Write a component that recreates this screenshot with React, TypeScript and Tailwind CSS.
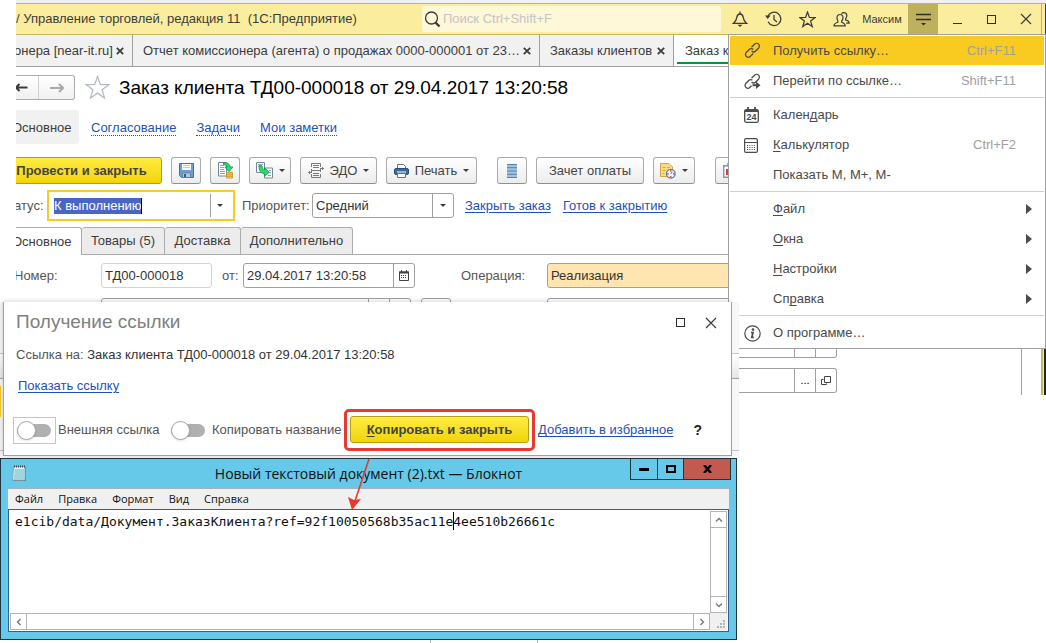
import type { ReactNode } from 'react';
import clsx from 'clsx';

function CloseMark({ size = 8 }: { size?: number }) {
  return (
    <svg width={size} height={size} viewBox="0 0 8 8" fill="none" stroke="#3c3c3c" strokeWidth="1.8">
      <path d="M.8.8l6.4 6.4M7.2.8L.8 7.2" />
    </svg>
  );
}

function ThinCross() {
  return (
    <svg width="12" height="12" viewBox="0 0 12 12" fill="none" stroke="#3c3c3c" strokeWidth="1.2">
      <path d="M1 1l10 10M11 1L1 11" />
    </svg>
  );
}

function Caret() {
  return (
    <svg width="6" height="3" viewBox="0 0 6 3" fill="#3c3c3c">
      <path d="M0 0h6L3 3z" />
    </svg>
  );
}

function SearchIcon() {
  return (
    <svg width="17" height="17" viewBox="0 0 17 17" fill="none" stroke="#3c3c3c">
      <circle cx="7.5" cy="7" r="6" strokeWidth="1.3" />
      <path d="M11.5 11.5l4 4" strokeWidth="2.4" />
    </svg>
  );
}

function BellIcon() {
  return (
    <svg width="16" height="16" viewBox="0 0 16 16" fill="none" stroke="#3c3c3c" strokeWidth="1.3">
      <path d="M1.500 12.300c2.200-1.800 3-3.800 3.300-6C5.100 4.200 6 3 8 3s2.900 1.200 3.200 3.300c.3 2.200 1.100 4.200 3.300 6z" />
      <path d="M8 .5v2.500" />
      <path d="M5.500 13.800h5L8 16z" fill="#3c3c3c" stroke="none" />
    </svg>
  );
}

function HistoryIcon() {
  return (
    <svg width="17" height="16" viewBox="0 0 17 16" fill="none" stroke="#3c3c3c" strokeWidth="1.3">
      <path d="M2.700 6a6.700 6.700 0 1 1 .4 4.800" />
      <path d="M0 4.500h5.600L2.700 8z" fill="#3c3c3c" stroke="none" />
      <path d="M9 4v4.500l3 2.500" />
    </svg>
  );
}

function StarIcon({ size, color }: { size: number; color: string }) {
  return (
    <svg width={size} height={size} viewBox="0 0 24 24" fill="none" stroke={color} strokeWidth={size > 18 ? 1.200 : 1.800}>
      <path d="M12 1.500l2.700 7.600 8.100.2-6.400 4.900 2.300 7.800L12 17.400 5.300 22l2.300-7.800L1.200 9.300l8.100-.2z" />
    </svg>
  );
}

function UsersIcon() {
  return (
    <svg width="17" height="15" viewBox="0 0 17 15" fill="none" stroke="#3c3c3c" strokeWidth="1.2">
      <path d="M7 2.500c2 0 3 1.200 3 3.200 0 1.500-.6 2.600-1.300 3.300v1.200c1.900.6 3.500 1.300 3.500 3.600H1c0-2.300 1.900-3 3.900-3.600V9C4.400 8.300 4 7.200 4 5.700c0-2 1-3.200 3-3.200z" />
      <path d="M8.500 1.800C9 1 9.800.6 10.800.6c2 0 3 1.200 3 3 0 1.400-.5 2.400-1.200 3.100v1.100c1.900.5 3.600 1.200 3.600 3.400h-3" />
    </svg>
  );
}

function LinkIcon({ arrow = false }: { arrow?: boolean }) {
  return (
    <svg width="17" height="17" viewBox="0 0 17 17" fill="none" stroke="#4a4a4a" strokeWidth="1.3">
      <path d="M7.500 5.200l3-3c1.200-1.200 3-1.200 4.100-.1s1.100 2.900-.1 4.100l-2.800 2.800c-1.200 1.200-3 1.100-4.100 0" />
      {arrow ? (
        <>
          <path d="M7.500 12.800l-1.500 1.500c-1.200 1.200-3 1.200-4.100.1s-1.100-2.900.1-4.100l2.700-2.800c1-1 2.500-1.100 3.600-.4" />
          <path d="M8.500 12.200h4" strokeWidth="2" />
          <path d="M12 8.500v7.400l4.500-3.700z" fill="#4a4a4a" stroke="none" />
        </>
      ) : (
        <path d="M9.200 11.500l-2.800 2.800c-1.200 1.200-3 1.200-4.100.1s-1.100-2.900.1-4.100l2.800-2.800c1.200-1.200 3-1.100 4.100 0" />
      )}
    </svg>
  );
}

function CalendarIcon() {
  return (
    <svg width="15" height="16" viewBox="0 0 15 16" fill="none" stroke="#4a4a4a">
      <rect x=".7" y="2.700" width="13.600" height="12.600" rx="1.500" strokeWidth="1.300" />
      <path d="M.7 4h13.600" strokeWidth="2" />
      <path d="M4 0v3M11 0v3" strokeWidth="1.800" />
      <text x="7.500" y="13.300" textAnchor="middle" fontSize="9" fontWeight="700" fill="#4a4a4a" stroke="none">24</text>
    </svg>
  );
}

function CalculatorIcon() {
  return (
    <svg width="14" height="15" viewBox="0 0 14 15" fill="none" stroke="#4a4a4a">
      <rect x=".6" y=".6" width="12.800" height="13.800" rx="1.500" strokeWidth="1.200" />
      <path d="M1 4.500h12" />
      <path d="M3 7.500h8M3 9.500h8M3 11.500h8" strokeDasharray="1 1.300" />
    </svg>
  );
}

function InfoIcon() {
  return (
    <svg width="17" height="17" viewBox="0 0 17 17" fill="none" stroke="#4a4a4a">
      <circle cx="8.500" cy="8.500" r="7.700" strokeWidth="1.200" />
      <circle cx="9" cy="4.600" r="1.300" fill="#4a4a4a" stroke="none" />
      <path d="M7 7.500h2l-1.200 4.800h2" strokeWidth="1.700" />
    </svg>
  );
}

function SaveIcon() {
  return (
    <svg width="15" height="15" viewBox="0 0 15 15">
      <path d="M.5.500h14v14h-12l-2-2z" fill="#6f9dcb" stroke="#416f9f" />
      <path d="M3 1h9v6H3z" fill="#fff" />
      <path d="M4 2.500h7M4 4.500h7" stroke="#b4cbe0" />
      <path d="M3.500 10h8v4.500h-8z" fill="#b9c5d0" stroke="#416f9f" strokeWidth=".6" />
      <path d="M5 11h2v3H5z" fill="#2f5c89" />
    </svg>
  );
}

function PostIcon() {
  return (
    <svg width="17" height="17" viewBox="0 0 17 17">
      <path d="M1.500.500h8v13.500h-8z" fill="#fff" stroke="#7388a0" />
      <path d="M3 3.500h4M3 5.500h4M3 7.500h4M3 9.500h5M3 11.500h5" stroke="#8fa2b5" />
      <path d="M6.500.8c4 0 6.500 1 6.700 4.200h2.800L12 9.500 7.800 5h2.400C10 3.500 9 2.800 6.500 2.800z" fill="#2dd873" stroke="#13944a" strokeWidth=".8" />
      <path d="M9.500 10.500h6v5.500h-6z" fill="#f5cf55" stroke="#c19421" strokeWidth=".8" />
      <path d="M9.500 12.300h6M9.500 14.200h6" stroke="#c19421" strokeWidth=".8" />
    </svg>
  );
}

function CreateFromIcon() {
  return (
    <svg width="17" height="17" viewBox="0 0 17 17">
      <path d="M.5.500h8v10h-8z" fill="#fff" stroke="#7388a0" />
      <path d="M2 2.500h5M2 4.500h4" stroke="#8fa2b5" />
      <path d="M8.500 6h8v10h-8z" fill="#fff" stroke="#7388a0" />
      <path d="M13 8.500h2M13 10.500h2M12 13.500h3" stroke="#8fa2b5" />
      <path d="M3 3.500l3 .3c.2 2.500 1 3.700 2.500 4V5.500l4.700 4.700-4.700 4.300v-2.700C5 11.500 3 9 3 3.500z" fill="#2dd873" stroke="#13944a" strokeWidth=".8" />
    </svg>
  );
}

function ExchangeIcon() {
  return (
    <svg width="16" height="15" viewBox="0 0 16 15" fill="none" stroke="#7b7b7b">
      <path d="M3.500 4V.500h9V4M3.500 11v3.500h9V11M3.500 6v3M12.500 6v3" />
      <path d="M5 2.500h6M5 4.500h6M4 7.500h8M5 10.500h6M5 12.500h6" />
      <path d="M12 5.500h4M0 9.500h4M1.500 8v3M14.500 4v3" />
    </svg>
  );
}

function PrinterIcon() {
  return (
    <svg width="15" height="14" viewBox="0 0 15 14">
      <path d="M3.500 5V.500h6l2 2V5" fill="#fff" stroke="#5f7488" />
      <rect x=".5" y="4.500" width="14" height="6" rx="1.500" fill="#3c6a96" stroke="#28527a" />
      <path d="M3 8h9" stroke="#fff" />
      <path d="M3.500 9.500h8v4h-8z" fill="#fff" stroke="#5f7488" />
    </svg>
  );
}

function RowsIcon() {
  return (
    <svg width="10" height="14" viewBox="0 0 10 14">
      <path d="M0 0h10v14H0z" fill="#a5c3df" />
      <path d="M0 .500h10M0 3.700h10M0 7h10M0 10.300h10M0 13.500h10" stroke="#5580a8" />
    </svg>
  );
}

function ReportIcon() {
  return (
    <svg width="16" height="16" viewBox="0 0 16 16">
      <path d="M.5.500h8.500l3.500 3.500v9.500h-12z" fill="#f5dc82" stroke="#cda94a" />
      <path d="M2.500 4.500h3M7 4.500h3M2.500 7.500h3M2.500 10.500h2" stroke="#cda94a" />
      <circle cx="10.800" cy="10.800" r="4.300" fill="#eef5fc" stroke="#4b77a5" strokeWidth="1.200" />
      <path d="M10.800 7.300v1.400M10.800 13v1.400M7.300 10.800h1.400M13 10.800h1.400" stroke="#d22" strokeWidth="1.200" />
      <path d="M10.800 10.800l1.500-2" stroke="#4b77a5" />
    </svg>
  );
}

function ChartIcon() {
  return (
    <svg width="15" height="15" viewBox="0 0 15 15">
      <path d="M.7 2.700h13.600v11.600H.7z" fill="#fff" stroke="#8494a3" strokeWidth="1.400" />
      <path d="M4.500 2.500V.700h6v1.800" fill="none" stroke="#8494a3" />
      <path d="M4 6v6" stroke="#e04030" strokeWidth="2" />
      <path d="M7 5v7" stroke="#e04030" strokeWidth="2" />
    </svg>
  );
}

function DateIcon() {
  return (
    <svg width="10" height="11" viewBox="0 0 10 11" fill="none" stroke="#444">
      <path d="M.5 2h9v8.500h-9z" />
      <path d="M0 2.500h10" strokeWidth="2" />
      <path d="M2.500 0v2M7.500 0v2" />
      <path d="M2 5.500h6M2 7.500h6" strokeDasharray="1 1" />
    </svg>
  );
}

function ToolButton({ label, className, children }: { label?: string; className?: string; children: ReactNode }) {
  return (
    <button
      aria-label={label}
      className={clsx(
        'flex h-[27px] shrink-0 items-center justify-center rounded-[3px] border border-[#ababab] border-b-[#8f8f8f] bg-gradient-to-b from-white to-[#ececec] text-[#444]',
        className,
      )}
    >
      {children}
    </button>
  );
}

const openTabs = [
  { title: 'онера [near-it.ru]', width: 'w-[117px] -indent-0.5' },
  { title: 'Отчет комиссионера (агента) о продажах 0000-000001 от 23…', width: 'w-[407px] pl-2.5' },
  { title: 'Заказы клиентов', width: 'w-[134px] pl-2.5' },
];

const sectionLinks = ['Согласование', 'Задачи', 'Мои заметки'];

const formTabs = [
  { title: 'Товары (5)', width: 'w-[83px]' },
  { title: 'Доставка', width: 'w-[76px]' },
  { title: 'Дополнительно', width: 'w-28' },
];

type MenuEntry = { before?: string; key?: string; after: string; shortcut?: string; icon?: ReactNode; sub?: boolean; active?: boolean };

const menuGroups: MenuEntry[][] = [
  [
    { after: 'Получить ссылку…', shortcut: 'Ctrl+F11', icon: <LinkIcon />, active: true },
    { after: 'Перейти по ссылке…', shortcut: 'Shift+F11', icon: <LinkIcon arrow /> },
  ],
  [
    { before: 'Кален', key: 'д', after: 'арь', icon: <CalendarIcon /> },
    { key: 'К', after: 'алькулятор', shortcut: 'Ctrl+F2', icon: <CalculatorIcon /> },
    { after: 'Показать М, М+, М-' },
  ],
  [
    { key: 'Ф', after: 'айл', sub: true },
    { key: 'О', after: 'кна', sub: true },
    { key: 'Н', after: 'астройки', sub: true },
    { before: 'Сп', key: 'р', after: 'авка', sub: true },
  ],
  [{ after: 'О программе…', icon: <InfoIcon /> }],
];

function TitleBar() {
  return (
    <header className="flex h-8 items-center border-y border-[#c3b660] bg-[#fbed9e] text-[#3c3c3c]">
      <h1 className="w-[406px] shrink-0 whitespace-pre text-[13px]">/ Управление торговлей, редакция 11  (1С:Предприятие)</h1>
      <label className="flex h-[26px] min-w-0 flex-1 items-center gap-0.5 rounded-[3px] bg-[#fef7d8] pl-0.5">
        <SearchIcon />
        <input
          aria-label="Поиск"
          placeholder="Поиск Ctrl+Shift+F"
          className="min-w-0 flex-1 bg-transparent text-[13px] outline-none placeholder:text-[#c4c4c4]"
        />
      </label>
      <div className="ml-[11px] flex items-center gap-[17px]">
        <button aria-label="Уведомления"><BellIcon /></button>
        <button aria-label="История"><HistoryIcon /></button>
        <button aria-label="Избранное"><StarIcon size={17} color="#3c3c3c" /></button>
        <button aria-label="Пользователи"><UsersIcon /></button>
      </div>
      <button className="ml-3 w-[40px] text-[11px]">Максим</button>
      <button aria-label="Меню" className="ml-[6px] flex h-[30px] w-[30px] items-center justify-center bg-[#bfb05e]">
        <svg width="15" height="13" viewBox="0 0 15 13" stroke="#2e2e2e" strokeWidth="1.400">
          <path d="M0 1.500h15M0 6.500h15" />
          <path d="M5 10h5l-2.500 2.500z" fill="#2e2e2e" stroke="none" />
        </svg>
      </button>
      <button aria-label="Свернуть" className="ml-[15px] flex h-[9px] w-[9px] items-end">
        <span className="h-px w-full bg-[#2e2e2e]" />
      </button>
      <button aria-label="Развернуть" className="ml-[25px] h-[9px] w-[9px] border border-[#2e2e2e]" />
      <button aria-label="Закрыть" className="ml-6"><ThinCross /></button>
      <span className="ml-[9px] h-full w-[5px] border-x border-l-[#c3b660] border-r-[#3a3a3a]" />
    </header>
  );
}

function MainMenu() {
  return (
    <nav className="absolute right-0 top-[34px] z-10 w-[318px] border border-[#a0a0a0] bg-white pt-px text-[13px] text-[#4a4a4a]">
      {menuGroups.map((group, index) => (
        <div key={index}>
          {index > 0 && <hr className="mx-px my-px h-0.5 border-0 border-t border-[#d2d2bc] pt-px" />}
          {group.map((item) => (
            <button
              key={item.after}
              className={clsx('flex h-[30px] w-full items-center border-x border-white pl-3.5 pr-3', item.active && 'bg-[#f9cb21] border-b')}
            >
              <span className="flex w-[29px] shrink-0 items-center">{item.icon}</span>
              <span>
                {item.before}
                {item.key && <u className="underline-offset-2 [text-decoration-skip-ink:none]">{item.key}</u>}
                {item.after}
              </span>
              {item.shortcut && <span className="ml-auto mr-4 text-[#a0a0a0]">{item.shortcut}</span>}
              {item.sub && (
                <svg className="ml-auto" width="6" height="10" viewBox="0 0 6 10" fill="#4a4a4a">
                  <path d="M0 0l6 5-6 5z" />
                </svg>
              )}
            </button>
          ))}
        </div>
      ))}
    </nav>
  );
}

function OrderForm() {
  return (
    <main className="ml-4 h-[267px] overflow-hidden text-[13px] text-[#555]">
      <div className="flex h-8 border-b border-[#a0a0a0] bg-[#f1f1f1] text-[#3c3c3c]">
        {openTabs.map((tab) => (
          <div key={tab.title} className={clsx('flex shrink-0 items-center justify-between border-r border-[#a0a0a0] pr-2', tab.width)}>
            <span className="truncate">{tab.title}</span>
            <button aria-label="Закрыть вкладку"><CloseMark /></button>
          </div>
        ))}
        <div className="flex flex-1 flex-col bg-white pl-[3px]">
          <span className="flex h-[27px] items-center whitespace-nowrap pl-2 pt-1">Заказ клиента</span>
          <span className="h-0.5 bg-[#009646]" />
        </div>
      </div>

      <div className="flex items-center pt-2">
        <div className="flex h-[25px] w-[59px] overflow-hidden rounded-r-[3px] border border-l-0 border-[#ababab] bg-gradient-to-b from-white to-[#f1f1f1]">
          <button aria-label="Назад" className="flex w-[23px] items-center border-r border-[#d0d0d0]">
            <svg width="12" height="9" viewBox="0 0 12 9" fill="none" stroke="#3c3c3c" strokeWidth="2">
              <path d="M11.500 4.500H1M3.500 1L0 4.500 3.500 8" />
            </svg>
          </button>
          <button aria-label="Вперед" className="flex flex-1 items-center justify-center">
            <svg width="14" height="10" viewBox="0 0 14 10" fill="none" stroke="#a8a8a8" strokeWidth="2">
              <path d="M0 5h12.500M9 1l4 4-4 4" />
            </svg>
          </button>
        </div>
        <button aria-label="В избранное" className="ml-2.5"><StarIcon size={25} color="#b3b8c2" /></button>
        <h2 className="ml-[9px] text-[19px] leading-6 text-black">Заказ клиента ТД00-000018 от 29.04.2017 13:20:58</h2>
      </div>

      <div className="mt-2.5 flex h-[34px] items-center gap-5">
        <span className="-mr-2 flex h-full w-[63px] items-center rounded-r-[3px] bg-[#f1f1f1] pt-px text-[#3c3c3c] -indent-1">Основное</span>
        {sectionLinks.map((title) => (
          <a key={title} href="#" className="mt-0.5 border-b border-dotted border-[#1f51b5] leading-[14px] text-[#1f51b5]">
            {title}
          </a>
        ))}
      </div>

      <div className="mt-[13px] flex gap-[9px]">
        <button className="-ml-[15px] h-[27px] w-[161px] shrink-0 rounded-[3px] border border-[#b39f14] bg-gradient-to-b from-[#ffec3d] to-[#f3d400] text-[13px] font-bold text-[#444]">
          Провести и закрыть
        </button>
        <ToolButton label="Записать" className="w-[30px]"><SaveIcon /></ToolButton>
        <ToolButton label="Провести" className="w-[30px]"><PostIcon /></ToolButton>
        <ToolButton label="Создать на основании" className="w-[42px] gap-1.5"><CreateFromIcon /><Caret /></ToolButton>
        <ToolButton className="w-[77px] gap-1.5"><ExchangeIcon />ЭДО<Caret /></ToolButton>
        <ToolButton className="w-[91px] gap-1.5"><PrinterIcon />Печать<Caret /></ToolButton>
        <ToolButton label="Структура" className="ml-[11px] w-[30px]"><RowsIcon /></ToolButton>
        <ToolButton className="w-[108px]">Зачет оплаты</ToolButton>
        <ToolButton label="Отчеты" className="w-[42px] gap-1.5"><ReportIcon /><Caret /></ToolButton>
        <ToolButton label="Анализ" className="ml-[11px] w-[30px]"><ChartIcon /></ToolButton>
      </div>

      <div className="mt-1.5 flex h-[31px] items-center">
        <label htmlFor="status" className="w-[31px] -indent-0.5">атус:</label>
        <div className="flex h-[31px] w-[188px] items-center border-2 border-[#f9cb21] pl-[5px]">
          <input
            id="status"
            defaultValue="К выполнению"
            className="h-4 w-[88px] border-r border-black bg-[#4a66c4] text-white outline-none"
          />
          <button aria-label="Выбрать статус" className="ml-auto flex h-[23px] w-[23px] items-center border-l border-[#a0a0a0] pl-1.5"><Caret /></button>
        </div>
        <label htmlFor="priority" className="ml-[7px] w-[70px]">Приоритет:</label>
        <div className="flex h-[25px] w-[142px] items-center rounded-[3px] border border-[#a0a0a0]">
          <select id="priority" className="h-full flex-1 appearance-none pl-[3px] text-[#333] outline-none">
            <option>Средний</option>
          </select>
          <span className="flex h-full w-[21px] items-center justify-center border-l border-[#a0a0a0]"><Caret /></span>
        </div>
        <a href="#" className="ml-[11px] text-[#1f51b5] underline underline-offset-2">Закрыть заказ</a>
        <a href="#" className="ml-3 text-[#1f51b5] underline underline-offset-2">Готов к закрытию</a>
      </div>

      <div className="mt-1.5 flex h-7 text-[#3c3c3c]">
        <button className="w-[66px] rounded-tr-[3px] border-r border-t border-[#ababab] text-left -indent-1">Основное</button>
        {formTabs.map((tab) => (
          <button key={tab.title} className={clsx('rounded-t-[3px] border border-l-0 border-[#ababab] bg-[#ececec]', tab.width)}>
            {tab.title}
          </button>
        ))}
        <span className="flex-1 border-b border-[#ababab]" />
      </div>

      <div className="mt-2 flex h-[25px] items-center">
        <label htmlFor="number" className="w-[85px] -indent-0.5">Номер:</label>
        <input id="number" defaultValue="ТД00-000018" className="h-full w-[111px] rounded-[3px] border border-[#d4d4d4] px-[3px] text-[#333]" />
        <label htmlFor="date" className="ml-2.5 w-[21px]">от:</label>
        <div className="flex h-full w-[172px] rounded-[3px] border border-[#a0a0a0]">
          <input id="date" defaultValue="29.04.2017 13:20:58" className="min-w-0 flex-1 px-[3px] text-[#333]" />
          <button aria-label="Выбрать дату" className="flex w-[21px] items-center justify-center border-l border-[#a0a0a0]"><DateIcon /></button>
        </div>
        <label htmlFor="operation" className="ml-[46px] w-[86px]">Операция:</label>
        <select id="operation" className="h-full flex-1 appearance-none rounded-[3px] border border-[#a0a0a0] bg-[#ffe6b0] px-[3px] text-[#333]">
          <option>Реализация</option>
        </select>
      </div>

      <div className="mt-2.5 flex h-[25px]">
        <div className="ml-[85px] flex w-[310px] justify-end rounded-[3px] border border-[#a0a0a0]">
          <span className="w-[21px] border-l border-[#a0a0a0]" />
          <span className="w-[21px] border-l border-[#a0a0a0]" />
        </div>
        <div className="ml-2.5 w-[30px] rounded-[3px] border border-[#a0a0a0]" />
        <div className="ml-24 flex-1 rounded-[3px] border border-[#a0a0a0]" />
      </div>
    </main>
  );
}

// slice of the form that stays visible on either side of the dialog
function FormSlice({ className, focused = false }: { className: string; focused?: boolean }) {
  return (
    <div className={clsx('shrink-0 bg-[#f7f7f7]', className)}>
      <div className="h-[52px] border-b border-[#c4c4c4]" />
      <div className="h-[25px] border-b border-[#a0a0a0] bg-gradient-to-b from-white to-[#e6e6e6]" />
      <div className="h-[72px] border-b border-[#c4c4c4] pt-[7px]">
        {focused && <div className="h-[31px] w-px bg-[#f9cb21]" />}
      </div>
    </div>
  );
}

function Switch({ label, focused = false }: { label: string; focused?: boolean }) {
  return (
    <label className="flex items-center gap-0.5">
      <span className={clsx('flex h-[27px] w-[43px] items-center pl-1', focused && 'outline -outline-offset-1 outline-[#f9cb21]')}>
        <input
          type="checkbox"
          className="relative h-[13px] w-[34px] appearance-none rounded-full bg-[#b0b0b0] before:absolute before:-top-[3px] before:left-0 before:h-[19px] before:w-[19px] before:rounded-full before:border before:border-[#a8a8a8] before:bg-white before:shadow-sm"
        />
      </span>
      {label}
    </label>
  );
}

function LinkDialog() {
  return (
    <div className="flex">
      <FormSlice className="w-[3px]" focused />
      <section className="min-w-0 flex-1 whitespace-nowrap border border-t-0 border-[#a0a0a0] bg-white pb-1 text-[13px] text-[#555] shadow-[0_0_6px_rgba(0,0,0,0.2)]">
        <div className="flex h-[41px] items-center pl-3 pr-3.5">
          <h2 className="flex-1 text-[19px] text-[#808080]">Получение ссылки</h2>
          <button aria-label="Развернуть" className="mr-5 h-[9px] w-[9px] border border-[#2e2e2e]" />
          <button aria-label="Закрыть"><ThinCross /></button>
        </div>
        <p className="h-6 pl-3 leading-6">
          Ссылка на: <span className="text-[#333]">Заказ клиента ТД00-000018 от 29.04.2017 13:20:58</span>
        </p>
        <p className="mt-[7px] h-6 pl-3.5 leading-6">
          <a href="#" className="text-[#1f51b5] underline underline-offset-2">Показать ссылку</a>
        </p>
        <div className="mt-[11px] flex h-[42px] items-center pl-[9px]">
          <div className="w-[154px]"><Switch label="Внешняя ссылка" focused /></div>
          <div className="w-[177px]"><Switch label="Копировать название" /></div>
          <div className="h-full w-[191px] rounded-[5px] border-[3px] border-[#e53a30] px-[3px] py-1">
            <button className="h-[27px] w-full rounded-[3px] border border-[#b39f14] bg-gradient-to-b from-[#ffec3d] to-[#f3d400] font-bold text-[#444]">
              <u className="underline-offset-2">К</u>опировать и закрыть
            </button>
          </div>
          <a href="#" className="ml-[3px] text-[#1f51b5] underline underline-offset-2">Добавить в избранное</a>
          <button aria-label="Справка" className="ml-5 text-[14px] font-bold text-[#222]">?</button>
        </div>
      </section>
      <FormSlice className="w-[7px]" />
    </div>
  );
}

function ScrollButton({ label, path, className }: { label: string; path: string; className: string }) {
  return (
    <button aria-label={label} className={clsx('flex items-center justify-center border-[#b4b4b4]', className)}>
      <svg width="8" height="8" viewBox="0 0 8 8" fill="none" stroke="#777" strokeWidth="1.400">
        <path d={path} />
      </svg>
    </button>
  );
}

function Notepad() {
  return (
    <section className="relative mr-0.5 mt-0.5 h-[182px] border border-[#1f3440] bg-[#66c9ea] px-[7px] font-['Open_Sans','Noto_Sans',sans-serif] text-[#111]">
      <div className="grid h-[29px] grid-cols-[1fr_auto_1fr]">
        <svg className="ml-1 mt-1.5" width="15" height="17" viewBox="0 0 15 17">
          <path d="M2 2h12v14H1z" fill="#6a7f86" />
          <path d="M1.500 1.500h11.500v13.500H.500z" fill="#d8f2f6" stroke="#7fa9b3" />
          <path d="M2.500 5h9.500M2.500 7h9.500M2.500 9h9.500M2 11h10M2 13h10" stroke="#68b6c6" />
          <path d="M2 1.500h11" stroke="#445" strokeWidth="2" strokeDasharray="1 1" />
        </svg>
        <h2 className="text-[14px] leading-[30px]">Новый текстовый документ (2).txt — Блокнот</h2>
        <div className="-mr-0.5 -mt-px flex h-[22px] justify-self-end border border-[#1f3440]">
          <button aria-label="Свернуть" className="flex w-[27px] items-center justify-center border-r border-[#1f3440]">
            <span className="h-[3px] w-2.5 bg-black" />
          </button>
          <button aria-label="Развернуть" className="flex w-[26px] items-center justify-center border-r border-[#1f3440]">
            <span className="h-2 w-2.5 border-2 border-black" />
          </button>
          <button aria-label="Закрыть" className="flex w-[46px] items-center justify-center bg-[#c25a50]">
            <svg width="9" height="8" viewBox="0 0 9 8" fill="none" stroke="#000" strokeWidth="2.400">
              <path d="M1 0l7 8M8 0L1 8" />
            </svg>
          </button>
        </div>
      </div>
      <div className="flex h-[21px] items-center gap-[15px] border-t border-[#a3b3ba] bg-[#f0f0f0] pl-[7px] text-[11px]">
        {['Файл', 'Правка', 'Формат', 'Вид', 'Справка'].map((item) => (
          <button key={item}>{item}</button>
        ))}
      </div>
      <div className="border border-[#2f628f] bg-white p-px">
        <div className="flex h-[102px]">
          <div className="relative min-w-0 flex-1 font-['DejaVu_Sans_Mono','Liberation_Mono',monospace] text-[13px] leading-[18px]">
            <textarea
              aria-label="Текст"
              wrap="off"
              defaultValue="e1cib/data/Документ.ЗаказКлиента?ref=92f10050568b35ac11e4ee510b26661c"
              className="block h-full w-full resize-none overflow-hidden pl-[5px] pt-0.5 outline-none"
            />
            {/* text cursor after the 56th character */}
            <span className="absolute left-[calc(5px+56ch)] top-px h-[18px] w-px bg-black" />
          </div>
          <div className="flex w-[17px] flex-col justify-between border border-[#b4b4b4]">
            <ScrollButton label="Вверх" path="M1 5.500l3-3 3 3" className="h-4 border-b" />
            <ScrollButton label="Вниз" path="M1 2.500l3 3 3-3" className="h-4 border-t" />
          </div>
        </div>
        <div className="flex h-[17px]">
          <div className="flex flex-1 justify-between border border-[#b4b4b4]">
            <ScrollButton label="Влево" path="M5.500 1l-3 3 3 3" className="w-4 border-r" />
            <ScrollButton label="Вправо" path="M2.500 1l3 3-3 3" className="w-4 border-l" />
          </div>
          <svg width="17" height="17" viewBox="0 0 17 17" fill="#b4b4b4">
            <path d="M0 0h17v17H0z" fill="#f0f0f0" />
            <path d="M13 7h2v2h-2zM10 10h2v2h-2zM13 10h2v2h-2zM7 13h2v2H7zM10 13h2v2h-2zM13 13h2v2h-2z" />
          </svg>
        </div>
      </div>
      <svg className="pointer-events-none absolute left-[346px] top-0" width="24" height="52" viewBox="0 0 24 52">
        <path d="M22 0L8 42" stroke="#e53a30" strokeWidth="1.600" />
        <path d="M5 51L1 38l6 3 7-1z" fill="#e53a30" />
      </svg>
    </section>
  );
}

function BackgroundFields() {
  return (
    <aside className="flex h-[93px] w-[307px] shrink-0 justify-between">
      <div className="pt-[31px]">
        <div className="flex h-[25px] w-[98px] justify-end rounded-r-[3px] border border-l-0 border-[#a0a0a0]">
          <span className="w-[21px] border-l border-[#a0a0a0]" />
          <span className="w-[21px] border-l border-[#a0a0a0]" />
        </div>
        <div className="mt-2.5 flex h-[25px] w-[98px] rounded-r-[3px] border border-l-0 border-[#a0a0a0] text-[13px]">
          <input aria-label="Договор" className="min-w-0 flex-1" />
          <button aria-label="Выбрать" className="w-[21px] border-l border-[#a0a0a0] text-[11px]">...</button>
          <button aria-label="Открыть" className="flex w-[21px] items-center justify-center border-l border-[#a0a0a0]">
            <svg width="10" height="10" viewBox="0 0 10 10" fill="none" stroke="#444">
              <path d="M3.500.500h6v6h-6z" />
              <path d="M2.500 3.500h-2v5h5v-1" />
            </svg>
          </button>
        </div>
      </div>
      <div className="flex">
        <span className="w-5 border-l border-[#a0a0a0]" />
        <span className="w-[5px] border-l-2 border-r-2 border-l-[#c3b660] border-r-[#2a2320] bg-[#fbed9e]" />
      </div>
    </aside>
  );
}

export default function App() {
  return (
    <div className="relative overflow-hidden bg-white font-['Liberation_Sans',Arial,sans-serif]">
      <div className="ml-4 h-[3px] bg-[#f0f0f5]" />
      <div className="pl-4">
        <TitleBar />
      </div>
      <OrderForm />
      <MainMenu />
      <div className="flex">
        <div className="relative z-20 min-w-0 flex-1 bg-white">
          <LinkDialog />
          <Notepad />
          <div className="flex h-[3px]">
            <span className="w-[431px] border-r border-[#b4b4b4]" />
            <span className="w-[107px] border-r border-[#b4b4b4]" />
          </div>
        </div>
        <BackgroundFields />
      </div>
    </div>
  );
}
